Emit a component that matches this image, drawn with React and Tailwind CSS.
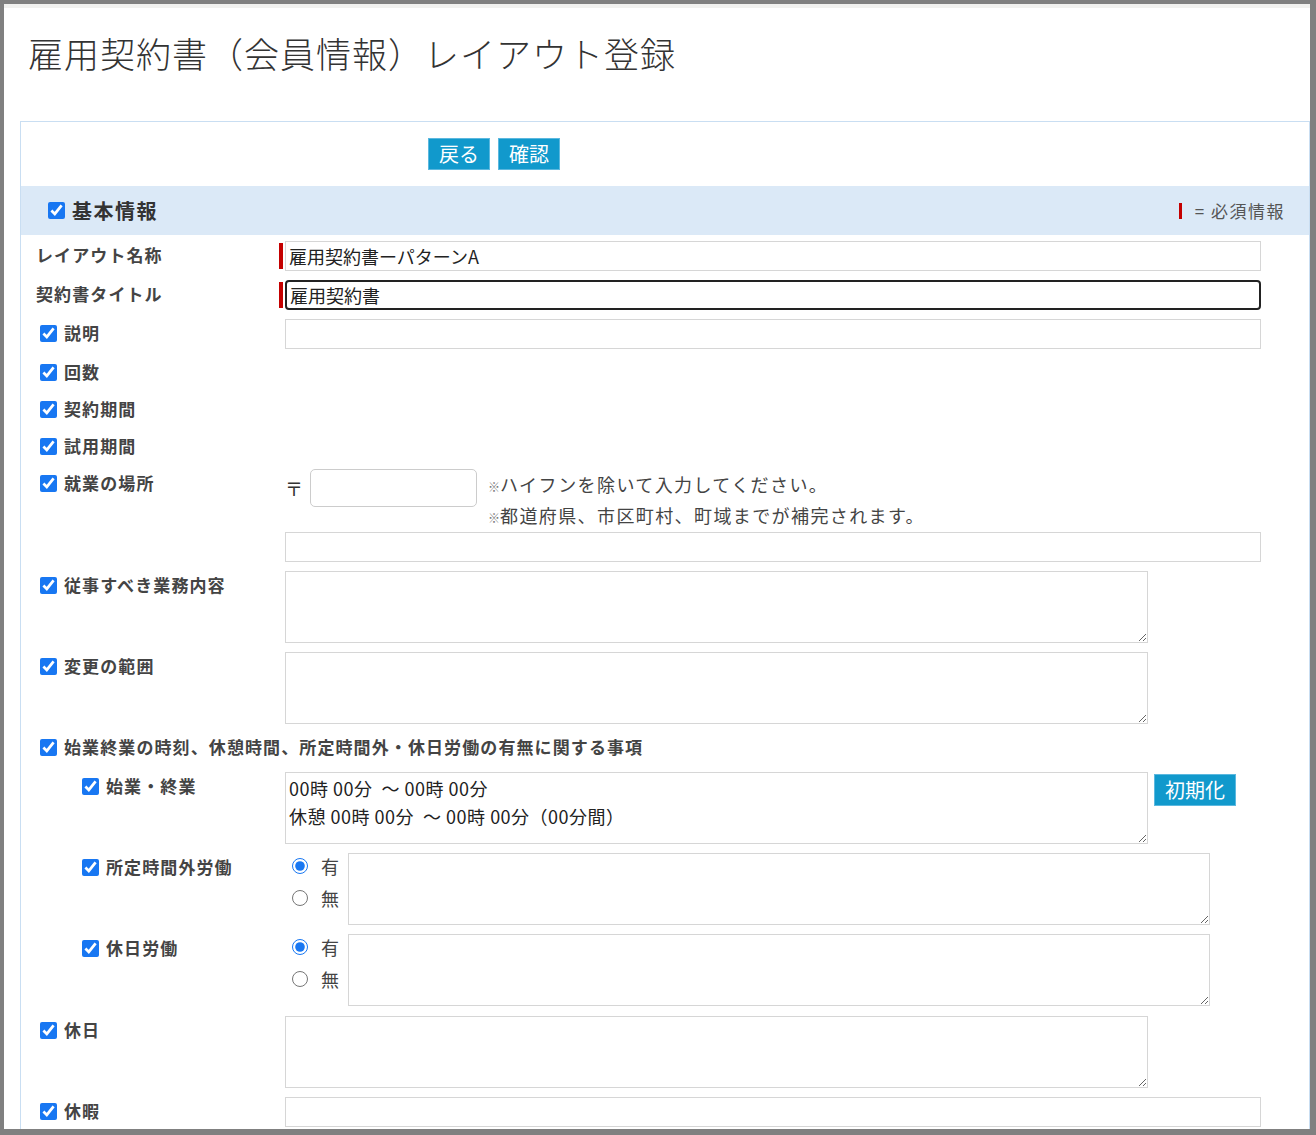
import React from "react";

const Check = () => (
  <input
    type="checkbox"
    defaultChecked
    className="w-[17px] h-[17px] m-0 shrink-0 accent-[#1877f2]"
  />
);

// one line of the form: label on the left, field on the right
const Row = ({ label, check = true, sub = false, className = "", children }) => (
  <div className={`flex items-start ${className}`}>
    <div
      className={`w-[264px] shrink-0 flex items-center h-[28px] ${
        sub ? "pl-[61px]" : check ? "pl-[19px]" : "pl-[15px]"
      }`}
    >
      {check && <Check />}
      <span
        className={`text-[17px] tracking-[1.1px] font-bold text-[#444] leading-[28px] whitespace-nowrap ${
          check ? "ml-[7px]" : ""
        }`}
      >
        {label}
      </span>
    </div>
    <div className="flex-1 min-w-0">{children}</div>
  </div>
);

const Required = ({ children }) => (
  <div className="flex -ml-[6px]">
    <div className="w-[4px] my-[2px] mr-[2px] bg-[#c40000]" />
    {children}
  </div>
);

const TextInput = ({ value = "", focused = false }) => (
  <input
    type="text"
    defaultValue={value}
    className={`w-[976px] h-[30px] px-[3px] text-[18px] text-[#222] outline-none ${
      focused
        ? "border-2 border-[#222] rounded-[4px]"
        : "border border-[#d6d6d6]"
    }`}
  />
);

const Area = ({ wide = false, value = "", className = "" }) => (
  <textarea
    defaultValue={value}
    readOnly={!!value}
    className={`${
      wide ? "w-[862px]" : "w-[863px]"
    } h-[72px] block border border-[#d6d6d6] px-[3px] pt-[1px] text-[18px] leading-[28px] text-[#222] outline-none ${className}`}
  />
);

const Btn = ({ children }) => (
  <button
    type="button"
    className="h-[32px] px-[10px] bg-[#1199cc] border border-[#5bb8df] text-white text-[20px] leading-[30px]"
  >
    {children}
  </button>
);

const YesNo = ({ name }) => (
  <div className="flex">
    <div className="w-[63px] shrink-0 flex flex-col gap-[6px]">
      {["有", "無"].map((v, i) => (
        <label key={v} className="h-[26px] flex items-center pl-[7px]">
          <input
            type="radio"
            name={name}
            defaultChecked={i === 0}
            className="w-[16px] h-[16px] m-0 accent-[#1877f2]"
          />
          <span className="ml-[13px] text-[18px] text-[#444]">{v}</span>
        </label>
      ))}
    </div>
    <Area wide />
  </div>
);

export default function App() {
  return (
    <div className="w-[1316px] h-[1135px] overflow-hidden bg-white border-l-4 border-t-4 border-r-[6px] border-b-[6px] border-[#808080] font-['Noto_Sans_CJK_JP','Noto_Sans',sans-serif]">
      <div className="h-[4px] bg-[#f1f1ef]" />
      <h1 className="pt-[22px] pl-[24px] text-[35px] tracking-[1px] leading-[46px] font-light text-[#333] whitespace-nowrap">
        雇用契約書（会員情報）レイアウト登録
      </h1>

      <div className="mt-[45px] ml-[16px] border border-[#c9def2] pb-[40px]">
        <div className="h-[64px] flex items-center gap-[8px] pl-[407px]">
          <Btn>戻る</Btn>
          <Btn>確認</Btn>
        </div>

        <div className="h-[49px] bg-[#dbe9f7] flex items-center justify-between pl-[27px] pr-[24px]">
          <div className="flex items-center">
            <Check />
            <span className="ml-[7px] text-[20px] tracking-[1.5px] font-bold text-[#333]">
              基本情報
            </span>
          </div>
          <div className="flex items-center text-[17px] tracking-[1.5px] text-[#555]">
            <span className="w-[3px] h-[16px] bg-[#c40000] mr-[13px]" />
            <span>=&nbsp;必須情報</span>
          </div>
        </div>

        <div className="flex flex-col gap-[9px] pt-[6px]">
          <Row label="レイアウト名称" check={false}>
            <Required>
              <TextInput value="雇用契約書ーパターンA" />
            </Required>
          </Row>
          <Row label="契約書タイトル" check={false}>
            <Required>
              <TextInput value="雇用契約書" focused />
            </Required>
          </Row>
          <Row label="説明">
            <TextInput />
          </Row>
          <Row label="回数" />
          <Row label="契約期間" />
          <Row label="試用期間" />
          <Row label="就業の場所">
            <div className="flex items-start">
              <div className="h-[38px] flex items-center">
                <span className="text-[18px] text-[#333]">〒</span>
                <input
                  type="text"
                  className="ml-[7px] w-[167px] h-[38px] border border-[#ccc] rounded-[5px] outline-none"
                />
              </div>
              <div className="ml-[11px] text-[18px] tracking-[1.4px] leading-[31px] text-[#444] whitespace-nowrap">
                <div className="h-[31px]">
                  <span className="text-[12px] leading-none tracking-normal text-[#777]">※</span>
                  ハイフンを除いて入力してください。
                </div>
                <div className="h-[31px]">
                  <span className="text-[12px] leading-none tracking-normal text-[#777]">※</span>
                  都道府県、市区町村、町域までが補完されます。
                </div>
              </div>
            </div>
            <div className="mt-[1px]">
              <TextInput />
            </div>
          </Row>
          <Row label="従事すべき業務内容">
            <Area />
          </Row>
          <Row label="変更の範囲">
            <Area />
          </Row>
          <Row
            label="始業終業の時刻、休憩時間、所定時間外・休日労働の有無に関する事項"
            className="pb-[2px]"
          />
          <Row label="始業・終業" sub>
            <div className="flex items-start">
              <Area
                className="tracking-[0.5px]"
                value={
                  "00時 00分  ～ 00時 00分\n休憩 00時 00分  ～ 00時 00分（00分間）"
                }
              />
              <div className="ml-[6px] mt-[2px]">
                <Btn>初期化</Btn>
              </div>
            </div>
          </Row>
          <Row label="所定時間外労働" sub>
            <YesNo name="overtime" />
          </Row>
          <Row label="休日労働" sub>
            <YesNo name="holidaywork" />
          </Row>
          <Row label="休日" className="pt-[1px]">
            <Area />
          </Row>
          <Row label="休暇">
            <TextInput />
          </Row>
        </div>
      </div>
    </div>
  );
}
